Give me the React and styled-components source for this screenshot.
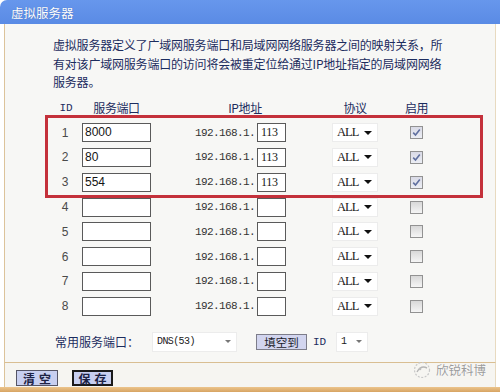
import React from "react";
import styled, { createGlobalStyle } from "styled-components";

const GlobalStyle = createGlobalStyle`
  html, body {
    margin: 0;
    padding: 0;
    background: #ffffff;
  }
  body {
    font-family: "Noto Sans CJK SC", "Liberation Sans", sans-serif;
  }
`;

const CJK = `"Noto Sans CJK SC", "Liberation Sans", sans-serif`;
const MONO = `"Liberation Mono", "Noto Sans CJK SC", monospace`;
const SERIF = `"Liberation Serif", "Noto Sans CJK SC", serif`;
const NAVY = "#1c2c5e";

const Page = styled.div`
  position: relative;
  width: 500px;
  height: 392px;
  overflow: hidden;
  background: #ffffff;
`;

const TitleBar = styled.div`
  height: 24px;
  display: flex;
  align-items: center;
  padding-left: 11px;
  background: linear-gradient(#6797ec, #5a8be5);
  border-top-left-radius: 7px;
  color: #ffffff;
  font-family: ${CJK};
  font-size: 12.5px;
  text-shadow: 0 0 1px rgba(20, 40, 90, 0.4);
`;

const Body = styled.div`
  box-sizing: border-box;
  height: 339px;
  margin-left: 4px;
  width: 492px;
  padding-top: 12px;
  background: #f7f7f5;
  border-left: 1px solid #dcc39a;
  border-right: 1px solid #e8dac0;
  border-bottom: 1px solid #d9be92;
`;

const Description = styled.p`
  margin: 0;
  padding-left: 48px;
  font-family: ${CJK};
  font-size: 12px;
  line-height: 18.5px;
  letter-spacing: -0.2px;
  color: ${NAVY};
`;

const Table = styled.div`
  margin-top: 4px;
  padding-left: 45px;
`;

const Row = styled.div`
  display: grid;
  grid-template-columns: 32px 69px 106px 29px 92px 77px;
  align-items: center;
  height: 24.8px;
`;

const HeadCell = styled.div`
  font-family: ${p => (p.$mono ? MONO : CJK)};
  font-size: ${p => (p.$mono ? "11px" : "12px")};
  color: ${NAVY};
  text-align: center;
  letter-spacing: ${p => (p.$mono ? "0" : "-0.4px")};
  grid-column: ${p => p.$span || "auto"};
  padding-left: ${p => p.$indent || 0}px;
  justify-self: ${p => (p.$end ? "end" : "stretch")};
  width: ${p => (p.$end ? "46px" : "auto")};
`;

const Highlight = styled.div`
  position: relative;
  &::after {
    content: "";
    position: absolute;
    top: -5px;
    bottom: -3px;
    left: -5px;
    right: 12px;
    border: 3px solid #c4313b;
    pointer-events: none;
  }
`;

const IdCell = styled.div`
  padding-right: 2px;
  text-align: center;
  font-family: "Liberation Sans", sans-serif;
  font-size: 12px;
  color: #4a4a4a;
`;

const TextBox = styled.div`
  box-sizing: border-box;
  width: ${p => p.$w}px;
  height: 19px;
  padding-left: ${p => (p.$serif ? 3 : 2)}px;
  background: #ffffff;
  border: 1px solid #5a5a5a;
  font-family: ${p => (p.$serif ? SERIF : `"Liberation Sans", sans-serif`)};
  font-size: 12px;
  letter-spacing: ${p => (p.$serif ? "-0.3px" : "0")};
  line-height: 17px;
  color: #151515;
`;

const IpPrefix = styled.div`
  padding-right: 2px;
  text-align: right;
  font-family: ${MONO};
  font-size: 11px;
  letter-spacing: -0.6px;
  color: #333333;
`;

const FakeSelect = styled.div`
  box-sizing: border-box;
  display: flex;
  align-items: center;
  justify-content: space-between;
  width: ${p => p.$w}px;
  height: ${p => p.$h || 19}px;
  padding: 0 5px 0 4px;
  justify-self: end;
  background: #ffffff;
  border: 1px solid #ececec;
  font-family: ${p => (p.$small ? MONO : SERIF)};
  font-size: ${p => (p.$small ? "10px" : "12.5px")};
  letter-spacing: ${p => (p.$small ? "-0.6px" : "-1px")};
  color: #1a1a1a;
`;

const Arrow = styled.span`
  width: 0;
  height: 0;
  border-left: ${p => (p.$light ? 3 : 4)}px solid transparent;
  border-right: ${p => (p.$light ? 3 : 4)}px solid transparent;
  border-top: ${p => (p.$light ? 3 : 4)}px solid ${p => (p.$light ? "#777" : "#111")};
`;

const Check = styled.span`
  justify-self: center;
  box-sizing: border-box;
  width: 13px;
  height: 13px;
  display: flex;
  align-items: center;
  justify-content: center;
  border: 1px solid #929292;
  background: ${p =>
    p.$on
      ? "linear-gradient(#d9dae6, #eceef4)"
      : "linear-gradient(#d8d8d8, #f5f5f5)"};
`;

const CommonRow = styled.div`
  display: flex;
  align-items: center;
  height: 20px;
  margin-top: 13px;
  padding-left: 50px;
`;

const Label = styled.span`
  width: ${p => p.$w}px;
  margin-left: ${p => p.$ml || 0}px;
  font-family: ${p => (p.$mono ? MONO : CJK)};
  font-size: ${p => (p.$mono ? "11px" : "12px")};
  color: ${NAVY};
  white-space: nowrap;
`;

const SmallSelect = styled(FakeSelect)`
  margin-left: ${p => p.$ml || 0}px;
`;

const FillButton = styled.div`
  box-sizing: border-box;
  width: 51px;
  height: 16px;
  margin-left: 19px;
  display: flex;
  align-items: center;
  justify-content: center;
  background: #d2d5ef;
  border: 1px solid #7d7d8a;
  font-family: ${CJK};
  font-size: 11.5px;
  color: #1b1b2b;
`;

const ButtonBar = styled.div`
  box-sizing: border-box;
  height: 24px;
  margin-left: 4px;
  width: 492px;
  display: flex;
  align-items: flex-start;
  gap: 14px;
  padding: 7px 0 0 11px;
  background: #f6f5f1;
  border-left: 1px solid #dcc39a;
  border-right: 1px solid #e8dac0;
`;

const Button = styled.div`
  box-sizing: border-box;
  height: 16px;
  width: ${p => p.$w}px;
  display: flex;
  align-items: center;
  justify-content: center;
  white-space: nowrap;
  background: #c8cff0;
  border: ${p => (p.$focus ? "2px solid #1a1a1a" : "1px solid #555566")};
  font-family: ${CJK};
  font-size: 12px;
  font-weight: 700;
  letter-spacing: 4px;
  padding-left: 4px;
  color: #1c2244;
`;

const BottomStrip = styled.div`
  height: 5px;
  background: linear-gradient(#ecc48c, #d7a462);
`;

const Watermark = styled.div`
  position: absolute;
  right: 14px;
  bottom: 13px;
  display: flex;
  align-items: center;
  gap: 4px;
  font-family: ${CJK};
  font-size: 12.5px;
  color: #9c9c9c;
  text-shadow: 0 0 1px #ffffff, 0 0 1px #ffffff;
`;

const ports = ["8000", "80", "554", "", "", "", "", ""];

const CheckMark = () => (
  <svg width="9" height="9" viewBox="0 0 9 9">
    <path d="M1.2 4.6 L3.5 7 L7.8 1.6" fill="none" stroke="#6070a0" strokeWidth="1.6" />
  </svg>
);

const TableRow = ({ n, port, on }) => (
  <Row>
    <IdCell>{n}</IdCell>
    <TextBox $w={69}>{port}</TextBox>
    <IpPrefix>192.168.1.</IpPrefix>
    <TextBox $w={29} $serif>{on ? "113" : ""}</TextBox>
    <FakeSelect $w={46}>
      ALL <Arrow />
    </FakeSelect>
    <Check $on={on}>{on && <CheckMark />}</Check>
  </Row>
);

const LogoMark = () => (
  <svg width="20" height="18" viewBox="0 0 20 18">
    <circle cx="10" cy="9" r="7.5" fill="none" stroke="#c8c8c8" strokeWidth="1.2" strokeDasharray="2 1.5" />
    <path d="M5 11 Q9 4 15 7" fill="none" stroke="#b5b5b5" strokeWidth="1.4" />
    <circle cx="8" cy="8" r="1.3" fill="#bdbdbd" />
  </svg>
);

export default function App() {
  return (
    <Page>
      <GlobalStyle />
      <TitleBar>虚拟服务器</TitleBar>
      <Body>
        <Description>
          虚拟服务器定义了广域网服务端口和局域网网络服务器之间的映射关系，所
          <br />
          有对该广域网服务端口的访问将会被重定位给通过IP地址指定的局域网网络
          <br />
          服务器。
        </Description>
        <Table>
          <Row>
            <HeadCell $mono>ID</HeadCell>
            <HeadCell>服务端口</HeadCell>
            <HeadCell $span="3 / span 2" $indent={53}>IP地址</HeadCell>
            <HeadCell $end>协议</HeadCell>
            <HeadCell>启用</HeadCell>
          </Row>
          <Highlight>
            {ports.slice(0, 3).map((p, i) => (
              <TableRow key={i} n={i + 1} port={p} on />
            ))}
          </Highlight>
          {ports.slice(3).map((p, i) => (
            <TableRow key={i + 3} n={i + 4} port={p} on={false} />
          ))}
        </Table>
        <CommonRow>
          <Label $w={97}>常用服务端口：</Label>
          <SmallSelect $w={85} $h={20} $small>
            DNS(53) <Arrow $light />
          </SmallSelect>
          <FillButton>填空到</FillButton>
          <Label $w={12} $ml={6} $mono>ID</Label>
          <SmallSelect $w={32} $h={20} $ml={11} $small>
            1 <Arrow $light />
          </SmallSelect>
        </CommonRow>
      </Body>
      <ButtonBar>
        <Button $w={42}>清空</Button>
        <Button $w={41} $focus>保存</Button>
      </ButtonBar>
      <BottomStrip />
      <Watermark>
        <LogoMark />
        欣锐科博
      </Watermark>
    </Page>
  );
}
